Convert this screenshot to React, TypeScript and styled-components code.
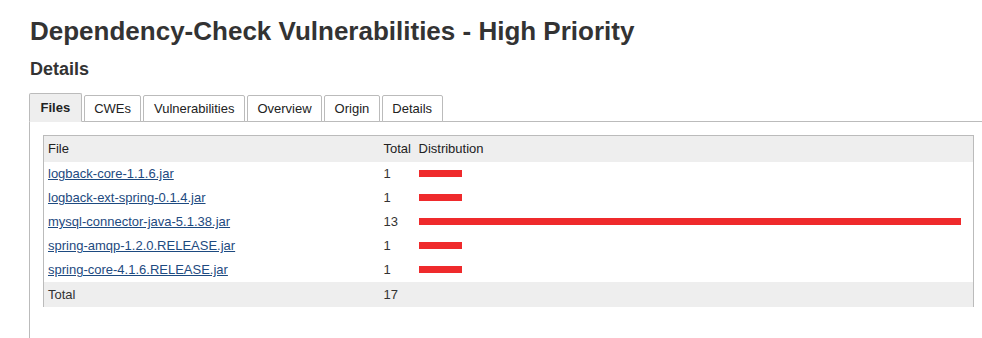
import styled, { createGlobalStyle } from "styled-components";

const GlobalStyle = createGlobalStyle`
    body {
        margin: 0;
        background: #fff;
        font-family: "Liberation Sans", Arial, sans-serif;
        color: #333;
    }
`;

const Page = styled.div`
    padding: 14px 0 0 29px;
    height: 338px;
    box-sizing: border-box;
    display: flex;
    flex-direction: column;
`;

const Title = styled.h1`
    margin: 0 0 0 1px;
    font-size: 26px;
    line-height: 34px;
    font-weight: 700;
    color: #333;
`;

const SubTitle = styled.h2`
    margin: 10px 0 0 1px;
    font-size: 18px;
    line-height: 22px;
    font-weight: 700;
    color: #333;
`;

const TabStrip = styled.div`
    display: flex;
    align-items: flex-end;
    gap: 2px;
    margin-top: 14px;
    border-bottom: 1px solid #bbb;
    height: 28px;
    box-sizing: border-box;
`;

const Tab = styled.div<{ $active?: boolean }>`
    box-sizing: border-box;
    height: ${(p) => (p.$active ? 29 : 27)}px;
    padding: 0 ${(p) => (p.$active ? 10.5 : 9.5)}px;
    margin-bottom: -1px;
    display: flex;
    align-items: center;
    font-size: 13px;
    font-weight: ${(p) => (p.$active ? 700 : 400)};
    color: #222;
    background: ${(p) => (p.$active ? "#eee" : "#fff")};
    border: 1px solid #bbb;
    border-bottom: ${(p) => (p.$active ? "1px solid #eee" : "1px solid #bbb")};
    border-radius: 2px 2px 0 0;
`;

const Panel = styled.div`
    flex: 1;
    border-left: 1px solid #bbb;
    padding: 13px 8px 0 13px;
`;

const Table = styled.table`
    width: 931px;
    table-layout: fixed;
    border-collapse: collapse;
    font-size: 13px;
    border-top: 1px solid #bbb;
    border-left: 1px solid #bbb;
    border-right: 1px solid #bbb;
`;

const HeadCell = styled.th<{ $w?: number }>`
    box-sizing: border-box;
    text-align: left;
    font-weight: 400;
    color: #222;
    background: #eee;
    height: 26px;
    padding: 0 5px 0 4px;
    width: ${(p) => (p.$w ? `${p.$w}px` : "auto")};
`;

const Cell = styled.td`
    box-sizing: border-box;
    height: 24px;
    padding: 0 5px 0 4px;
    color: #333;
    white-space: nowrap;
`;

const TotalCell = styled.td`
    box-sizing: border-box;
    height: 25px;
    padding: 0 5px 0 4px;
    background: #eee;
    color: #333;
`;

const FileLink = styled.a`
    color: #1d4a80;
    text-decoration: underline;
`;

const Bar = styled.div`
    height: 7px;
    background: #ef2a2c;
`;

const files = [
    { name: "logback-core-1.1.6.jar", total: 1 },
    { name: "logback-ext-spring-0.1.4.jar", total: 1 },
    { name: "mysql-connector-java-5.1.38.jar", total: 13 },
    { name: "spring-amqp-1.2.0.RELEASE.jar", total: 1 },
    { name: "spring-core-4.1.6.RELEASE.jar", total: 1 },
];

const tabs = ["Files", "CWEs", "Vulnerabilities", "Overview", "Origin", "Details"];

export default function App() {
    const max = Math.max(...files.map((f) => f.total));
    const sum = files.reduce((a, f) => a + f.total, 0);
    return (
        <Page>
            <GlobalStyle />
            <Title>Dependency-Check Vulnerabilities - High Priority</Title>
            <SubTitle>Details</SubTitle>
            <TabStrip>
                {tabs.map((t, i) => (
                    <Tab key={t} $active={i === 0}>{t}</Tab>
                ))}
            </TabStrip>
            <Panel>
                <Table>
                    <thead>
                        <tr>
                            <HeadCell $w={336}>File</HeadCell>
                            <HeadCell $w={35}>Total</HeadCell>
                            <HeadCell>Distribution</HeadCell>
                        </tr>
                    </thead>
                    <tbody>
                        {files.map((f) => (
                            <tr key={f.name}>
                                <Cell><FileLink href="#">{f.name}</FileLink></Cell>
                                <Cell>{f.total}</Cell>
                                <Cell>
                                    <Bar style={{ width: `${Math.max(43, Math.round((f.total / max) * 542))}px` }} />
                                </Cell>
                            </tr>
                        ))}
                        <tr>
                            <TotalCell>Total</TotalCell>
                            <TotalCell>{sum}</TotalCell>
                            <TotalCell />
                        </tr>
                    </tbody>
                </Table>
            </Panel>
        </Page>
    );
}
